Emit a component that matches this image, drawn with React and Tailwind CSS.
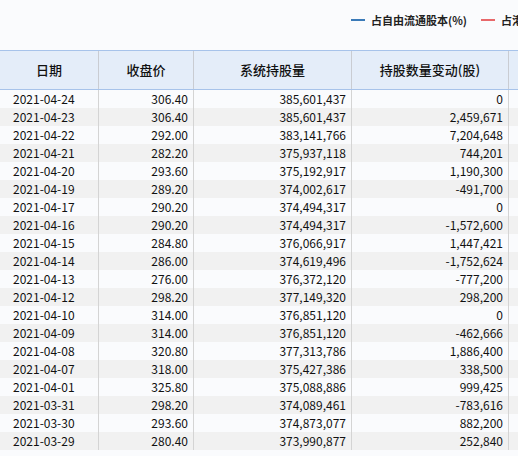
import React from "react";

const rows = [
  ["2021-04-24", "306.40", "385,601,437", "0"],
  ["2021-04-23", "306.40", "385,601,437", "2,459,671"],
  ["2021-04-22", "292.00", "383,141,766", "7,204,648"],
  ["2021-04-21", "282.20", "375,937,118", "744,201"],
  ["2021-04-20", "293.60", "375,192,917", "1,190,300"],
  ["2021-04-19", "289.20", "374,002,617", "-491,700"],
  ["2021-04-17", "290.20", "374,494,317", "0"],
  ["2021-04-16", "290.20", "374,494,317", "-1,572,600"],
  ["2021-04-15", "284.80", "376,066,917", "1,447,421"],
  ["2021-04-14", "286.00", "374,619,496", "-1,752,624"],
  ["2021-04-13", "276.00", "376,372,120", "-777,200"],
  ["2021-04-12", "298.20", "377,149,320", "298,200"],
  ["2021-04-10", "314.00", "376,851,120", "0"],
  ["2021-04-09", "314.00", "376,851,120", "-462,666"],
  ["2021-04-08", "320.80", "377,313,786", "1,886,400"],
  ["2021-04-07", "318.00", "375,427,386", "338,500"],
  ["2021-04-01", "325.80", "375,088,886", "999,425"],
  ["2021-03-31", "298.20", "374,089,461", "-783,616"],
  ["2021-03-30", "293.60", "374,873,077", "882,200"],
  ["2021-03-29", "280.40", "373,990,877", "252,840"],
];

export default function App() {
  return (
    <div className="w-[518px] h-[456px] overflow-hidden bg-[#fafbfd] text-[#111] font-['Microsoft_YaHei','Noto_Sans_CJK_SC',sans-serif]">
      {/* legend */}
      <div className="h-[50px] pt-[12px] pl-[351px] whitespace-nowrap overflow-hidden">
        <div className="flex items-center text-[11px] font-bold text-[#222] w-[220px]">
          <span className="w-[14px] h-[2px] bg-[#3a7ab8]"></span>
          <span className="ml-[6px]">占自由流通股本(%)</span>
          <span className="w-[14px] h-[2px] bg-[#e8686a] ml-[14px]"></span>
          <span className="ml-[6px]">占港股通持股</span>
        </div>
      </div>

      <div className="w-[540px]">
        {/* header */}
        <div className="flex h-[40px] bg-[#e4edf9] border-t border-b border-[#a7c3ea] text-[13px] font-medium">
          <div className="w-[99px] flex items-center justify-center border-r border-[#c9ccd2]">日期</div>
          <div className="w-[95px] flex items-center justify-center border-r border-[#c9ccd2]">收盘价</div>
          <div className="w-[158px] flex items-center justify-center border-r border-[#c9ccd2]">系统持股量</div>
          <div className="w-[157px] flex items-center justify-center border-r border-[#c9ccd2]">持股数量变动(股)</div>
          <div className="flex-1"></div>
        </div>

        {/* rows */}
        {rows.map((r, i) => (
          <div
            key={r[0]}
            className={`flex h-[18px] text-[12px] leading-[18px] ${i % 2 === 1 ? "bg-[#f1f1f1]" : "bg-[#fafbfd]"}`}
          >
            <div className="w-[99px] pl-[13px] border-r border-[#d4d4d4]">{r[0]}</div>
            <div className="w-[95px] pr-[5px] text-right border-r border-[#d4d4d4]">{r[1]}</div>
            <div className="w-[158px] pr-[5px] text-right border-r border-[#d4d4d4]">{r[2]}</div>
            <div className="w-[157px] pr-[5px] text-right border-r border-[#d4d4d4]">{r[3]}</div>
            <div className="flex-1"></div>
          </div>
        ))}
      </div>
    </div>
  );
}
